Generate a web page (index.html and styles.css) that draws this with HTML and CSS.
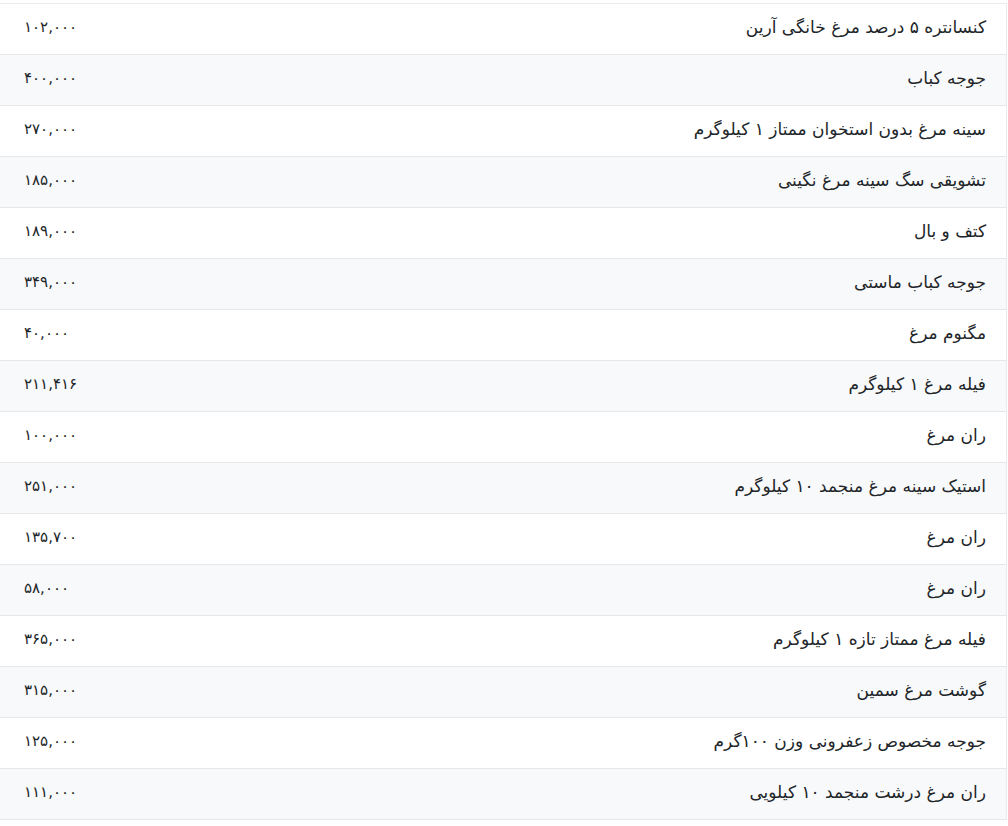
FILE: index.html
```html
<!DOCTYPE html>
<html lang="fa" dir="rtl">
<head>
<meta charset="utf-8">
<link rel="stylesheet" href="styles.css">
</head>
<body>
<table class="price-table">
<tbody>
<tr><td class="name">کنسانتره ۵ درصد مرغ خانگی آرین</td><td class="price">۱۰۲,۰۰۰</td></tr>
<tr><td class="name">جوجه کباب</td><td class="price">۴۰۰,۰۰۰</td></tr>
<tr><td class="name">سینه مرغ بدون استخوان ممتاز ۱ کیلوگرم</td><td class="price">۲۷۰,۰۰۰</td></tr>
<tr><td class="name">تشویقی سگ سینه مرغ نگینی</td><td class="price">۱۸۵,۰۰۰</td></tr>
<tr><td class="name">کتف و بال</td><td class="price">۱۸۹,۰۰۰</td></tr>
<tr><td class="name">جوجه کباب ماستی</td><td class="price">۳۴۹,۰۰۰</td></tr>
<tr><td class="name">مگنوم مرغ</td><td class="price">۴۰,۰۰۰</td></tr>
<tr><td class="name">فیله مرغ ۱ کیلوگرم</td><td class="price">۲۱۱,۴۱۶</td></tr>
<tr><td class="name">ران مرغ</td><td class="price">۱۰۰,۰۰۰</td></tr>
<tr><td class="name">استیک سینه مرغ منجمد ۱۰ کیلوگرم</td><td class="price">۲۵۱,۰۰۰</td></tr>
<tr><td class="name">ران مرغ</td><td class="price">۱۳۵,۷۰۰</td></tr>
<tr><td class="name">ران مرغ</td><td class="price">۵۸,۰۰۰</td></tr>
<tr><td class="name">فیله مرغ ممتاز تازه ۱ کیلوگرم</td><td class="price">۳۶۵,۰۰۰</td></tr>
<tr><td class="name">گوشت مرغ سمین</td><td class="price">۳۱۵,۰۰۰</td></tr>
<tr><td class="name">جوجه مخصوص زعفرونی وزن ۱۰۰گرم</td><td class="price">۱۲۵,۰۰۰</td></tr>
<tr><td class="name">ران مرغ درشت منجمد ۱۰ کیلویی</td><td class="price">۱۱۱,۰۰۰</td></tr>
</tbody>
</table>
</body>
</html>
```

FILE: styles.css
```css
html, body {
  margin: 0;
  padding: 0;
  background: #fff;
}
body {
  padding-top: 3px;
  font-family: "DejaVu Sans", "Noto Sans", sans-serif;
  color: #212529;
  font-size: 17px;
  overflow: hidden;
}
.price-table {
  width: 1008px;
  margin-right: 1px;
  border-collapse: collapse;
  border-top: 1px solid #e9ecef;
  border-right: 1px solid #e9ecef;
}
.price-table tr {
  height: 51px;
  border-bottom: 1px solid #e5e7eb;
}
.price-table tr:nth-child(even) {
  background: #f8f9fa;
}
.price-table td {
  padding: 0 20px 4px 20px;
  vertical-align: middle;
}
.price-table .name {
  text-align: right;
}
.price-table .price {
  text-align: left;
  padding-left: 25px;
  font-size: 15px;
}
```
